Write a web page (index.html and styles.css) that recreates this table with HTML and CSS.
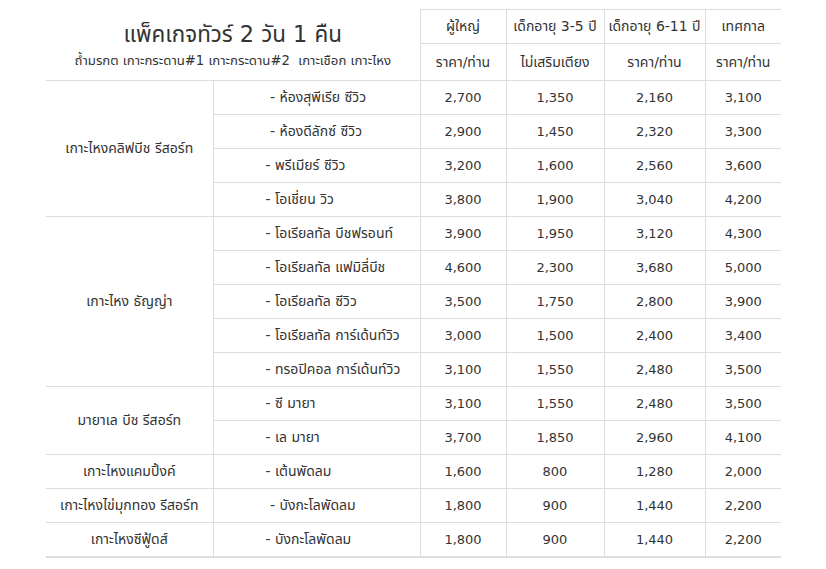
FILE: index.html
```html
<!DOCTYPE html>
<html lang="th">
<head>
<meta charset="utf-8">
<link rel="stylesheet" href="styles.css">
</head>
<body>
<table class="price">
  <colgroup>
    <col class="c-resort">
    <col class="c-room">
    <col class="c-adult">
    <col class="c-kid35">
    <col class="c-kid611">
    <col class="c-fest">
  </colgroup>
  <thead>
    <tr>
      <th class="title" rowspan="2" colspan="2">
        <div class="title-main">แพ็คเกจทัวร์ 2 วัน 1 คืน</div>
        <div class="title-sub">ถ้ำมรกต เกาะกระดาน#1 เกาะกระดาน#2&nbsp; เกาะเชือก เกาะไหง</div>
      </th>
      <th class="h">ผู้ใหญ่</th>
      <th class="h">เด็กอายุ 3-5 ปี</th>
      <th class="h">เด็กอายุ 6-11 ปี</th>
      <th class="h">เทศกาล</th>
    </tr>
    <tr class="h2">
      <th class="h">ราคา/ท่าน</th>
      <th class="h">ไม่เสริมเตียง</th>
      <th class="h">ราคา/ท่าน</th>
      <th class="h">ราคา/ท่าน</th>
    </tr>
  </thead>
  <tbody>
    <tr><td class="resort" rowspan="4">เกาะไหงคลิฟบีช รีสอร์ท</td><td class="room">&nbsp;- ห้องสุพีเรีย ซีวิว</td><td>2,700</td><td>1,350</td><td>2,160</td><td>3,100</td></tr>
    <tr><td class="room">&nbsp;- ห้องดีลักซ์ ซีวิว</td><td>2,900</td><td>1,450</td><td>2,320</td><td>3,300</td></tr>
    <tr><td class="room">- พรีเมียร์ ซีวิว</td><td>3,200</td><td>1,600</td><td>2,560</td><td>3,600</td></tr>
    <tr><td class="room">- โอเชี่ยน วิว</td><td>3,800</td><td>1,900</td><td>3,040</td><td>4,200</td></tr>
    <tr><td class="resort" rowspan="5">เกาะไหง ธัญญ่า</td><td class="room">- โอเรียลทัล บีชฟรอนท์</td><td>3,900</td><td>1,950</td><td>3,120</td><td>4,300</td></tr>
    <tr><td class="room">- โอเรียลทัล แฟมิลี่บีช</td><td>4,600</td><td>2,300</td><td>3,680</td><td>5,000</td></tr>
    <tr><td class="room">- โอเรียลทัล ซีวิว</td><td>3,500</td><td>1,750</td><td>2,800</td><td>3,900</td></tr>
    <tr><td class="room">- โอเรียลทัล การ์เด้นท์วิว</td><td>3,000</td><td>1,500</td><td>2,400</td><td>3,400</td></tr>
    <tr><td class="room">- ทรอปิคอล การ์เด้นท์วิว</td><td>3,100</td><td>1,550</td><td>2,480</td><td>3,500</td></tr>
    <tr><td class="resort" rowspan="2">มายาเล บีช รีสอร์ท</td><td class="room">- ซี มายา</td><td>3,100</td><td>1,550</td><td>2,480</td><td>3,500</td></tr>
    <tr><td class="room">- เล มายา</td><td>3,700</td><td>1,850</td><td>2,960</td><td>4,100</td></tr>
    <tr><td class="resort">เกาะไหงแคมปิ้งค์</td><td class="room">- เต้นพัดลม</td><td>1,600</td><td>800</td><td>1,280</td><td>2,000</td></tr>
    <tr><td class="resort">เกาะไหงไข่มุกทอง รีสอร์ท</td><td class="room">&nbsp;- บังกะโลพัดลม</td><td>1,800</td><td>900</td><td>1,440</td><td>2,200</td></tr>
    <tr><td class="resort">เกาะไหงซีฟู้ดส์</td><td class="room">- บังกะโลพัดลม</td><td>1,800</td><td>900</td><td>1,440</td><td>2,200</td></tr>
  </tbody>
</table>
</body>
</html>
```
FILE: styles.css
```css
html, body {
  margin: 0;
  padding: 0;
  background: #fff;
}
body {
  padding: 9px 0 0 46px;
  font-family: "DejaVu Sans", "Noto Sans Thai", sans-serif;
  font-size: 13px;
  color: #333;
}
.price {
  border-collapse: collapse;
  table-layout: fixed;
  width: 735px;
}
.c-resort { width: 167px; }
.c-room { width: 207px; }
.c-adult { width: 86px; }
.c-kid35 { width: 98px; }
.c-kid611 { width: 101px; }
.c-fest { width: 76px; }
.price th, .price td {
  padding: 0;
  text-align: center;
  vertical-align: middle;
  font-weight: normal;
  border: 1px solid #ddd;
}
.price th.title {
  border-top: none;
  border-left: none;
}
.price th.h {
  height: 33px;
  font-size: 14px;
}
.price .h2 th.h {
  height: 36px;
}
.price tbody td {
  height: 33px;
}
.price td.resort {
  border-left: none;
  font-size: 14px;
}
.price td.room {
  text-align: left;
  padding-left: 52px;
  font-size: 14px;
}
.price tbody tr:last-child td {
  border-bottom: 2px solid #ddd;
}
.price tr > *:last-child {
  border-right: none;
}
.title-main {
  font-size: 22.4px;
  line-height: 30px;
  color: #333;
}
.title-sub {
  font-size: 13.2px;
  line-height: 20px;
  margin-top: 2px;
}
```
